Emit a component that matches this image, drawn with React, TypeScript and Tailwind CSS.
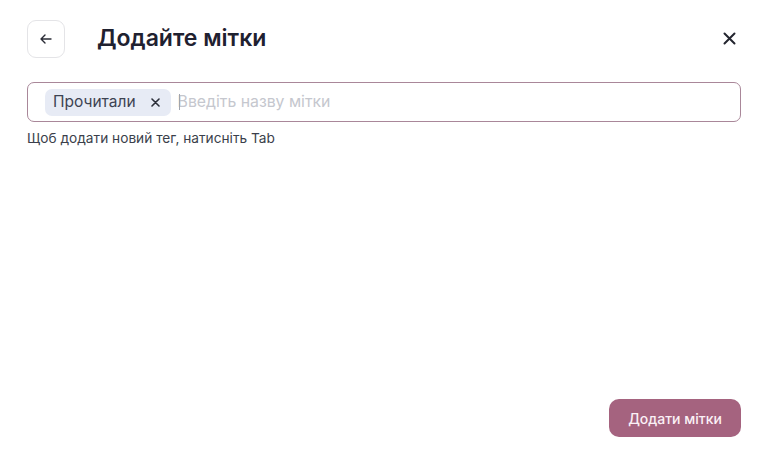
import React from "react";

export default function App() {
  return (
    <div
      className="w-[768px] h-[452px] bg-white flex flex-col px-[27px] pt-[20px] pb-[15px]"
      style={{ fontFamily: "Inter, 'Noto Sans', sans-serif" }}
    >
      <div className="flex items-center h-[38px]">
        <button className="w-[38px] h-[38px] rounded-[9px] border border-[#e4e4e7] flex items-center justify-center text-[#2a2c36] bg-white">
          <svg width="14" height="14" viewBox="0 0 14 14" fill="none" stroke="currentColor" strokeWidth="1.4" strokeLinecap="round" strokeLinejoin="round">
            <path d="M12 7H2M6 3L2 7l4 4" />
          </svg>
        </button>
        <h1 className="ml-[32px] text-[23px] leading-[28px] font-semibold text-[#1f2130] -mt-[2px]">Додайте мітки</h1>
        <button className="ml-auto -mt-[2px] w-[24px] h-[24px] flex items-center justify-center text-[#23252f]">
          <svg width="13" height="13" viewBox="0 0 13 13" fill="none" stroke="currentColor" strokeWidth="2" strokeLinecap="round">
            <path d="M1.5 1.5l10 10M11.5 1.5l-10 10" />
          </svg>
        </button>
      </div>

      <div className="mt-[24px] h-[40px] rounded-[7px] border border-[#a98799] flex items-center pl-[17px] pr-3">
        <div className="h-[27px] rounded-[7px] bg-[#e7ebf5] flex items-center pl-[8px] pr-[11px]">
          <span className="text-[15.5px] text-[#3d4352]">Прочитали</span>
          <svg className="ml-[15px] text-[#2c2f3a]" width="9" height="9" viewBox="0 0 9 9" fill="none" stroke="currentColor" strokeWidth="1.6" strokeLinecap="round">
            <path d="M1 1l7 7M8 1L1 8" />
          </svg>
        </div>
        <div className="ml-[7px] flex items-center relative">
          <span className="absolute left-[1px] top-1/2 -translate-y-1/2 w-px h-[16px] bg-[#a0a4ad]" />
          <span className="text-[15.8px] text-[#c5c7ce]">Введіть назву мітки</span>
        </div>
      </div>

      <p className="mt-[6px] text-[13.7px] text-[#3b3f4b]">Щоб додати новий тег, натисніть Tab</p>

      <div className="mt-auto flex justify-end">
        <button className="w-[132px] h-[38px] rounded-[10px] bg-[#a5637f] text-[#fbf1f6] text-[14px] font-medium">
          Додати мітки
        </button>
      </div>
    </div>
  );
}
